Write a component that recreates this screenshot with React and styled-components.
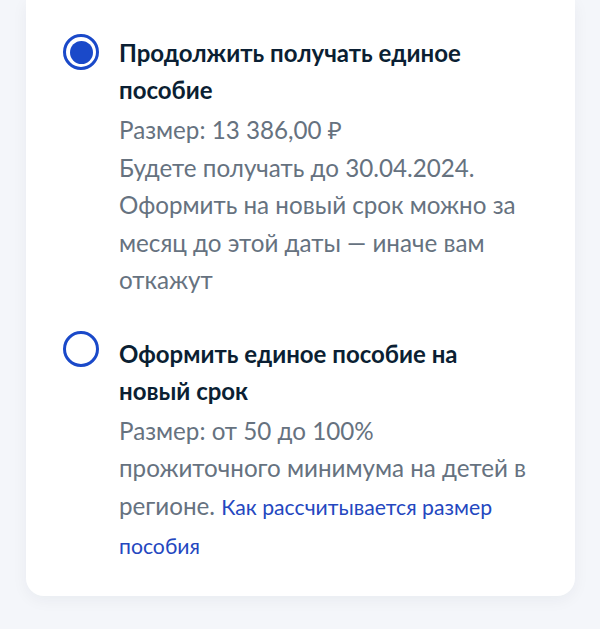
import styled, { createGlobalStyle } from "styled-components";

const Global = createGlobalStyle`
    html, body {
        margin: 0;
        padding: 0;
        background-color: #f4f6fa;
        font-family: Lato, "Noto Sans", sans-serif;
    }
`;

const Page = styled.div`
    width: 600px;
    height: 629px;
    padding: 0 25px 0 26px;
    box-sizing: border-box;
    overflow: hidden;
`;

const Card = styled.div`
    background-color: #ffffff;
    border-radius: 0 0 18px 18px;
    box-shadow: 0 4px 16px rgba(11, 31, 51, 0.05);
    padding: 34px 36px 30px 37px;
    display: flex;
    flex-direction: column;
    gap: 36px;
`;

const Option = styled.label`
    display: flex;
    align-items: flex-start;
    gap: 20px;
    cursor: pointer;
`;

const Radio = styled.span`
    flex: none;
    width: 36px;
    height: 36px;
    margin-top: ${(p) => p.$offset}px;
    box-sizing: border-box;
    border: 3px solid #1a49c9;
    border-radius: 50%;
    display: flex;
    align-items: center;
    justify-content: center;

    &::after {
        content: "";
        width: 23px;
        height: 23px;
        border-radius: 50%;
        background-color: #1a49c9;
        display: ${(p) => (p.$checked ? "block" : "none")};
    }
`;

const Texts = styled.div`
    display: flex;
    flex-direction: column;
    max-width: 414px;
`;

const Title = styled.div`
    font-size: 24px;
    font-weight: 700;
    line-height: 37px;
    color: #0b1f33;
`;

const Body = styled.div`
    font-size: 24.2px;
    line-height: 37.5px;
    color: #66727f;
    margin-top: 3px;
`;

const Link = styled.a`
    font-size: 21.2px;
    color: #2447bf;
    text-decoration: none;
`;

function App() {
    return (
        <Page>
            <Global />
            <Card>
                <Option>
                    <Radio $checked $offset={0} />
                    <Texts>
                        <Title>Продолжить получать единое<br />пособие</Title>
                        <Body>
                            Размер: 13 386,00 ₽<br />
                            Будете получать до 30.04.2024.<br />
                            Оформить на новый срок можно за месяц до этой даты — иначе вам откажут
                        </Body>
                    </Texts>
                </Option>
                <Option>
                    <Radio $offset={-4} />
                    <Texts>
                        <Title>Оформить единое пособие на<br />новый срок</Title>
                        <Body>
                            Размер: от 50 до 100% прожиточного минимума на детей в регионе.{" "}
                            <Link href="#">Как рассчитывается размер пособия</Link>
                        </Body>
                    </Texts>
                </Option>
            </Card>
        </Page>
    );
}

export default App;
